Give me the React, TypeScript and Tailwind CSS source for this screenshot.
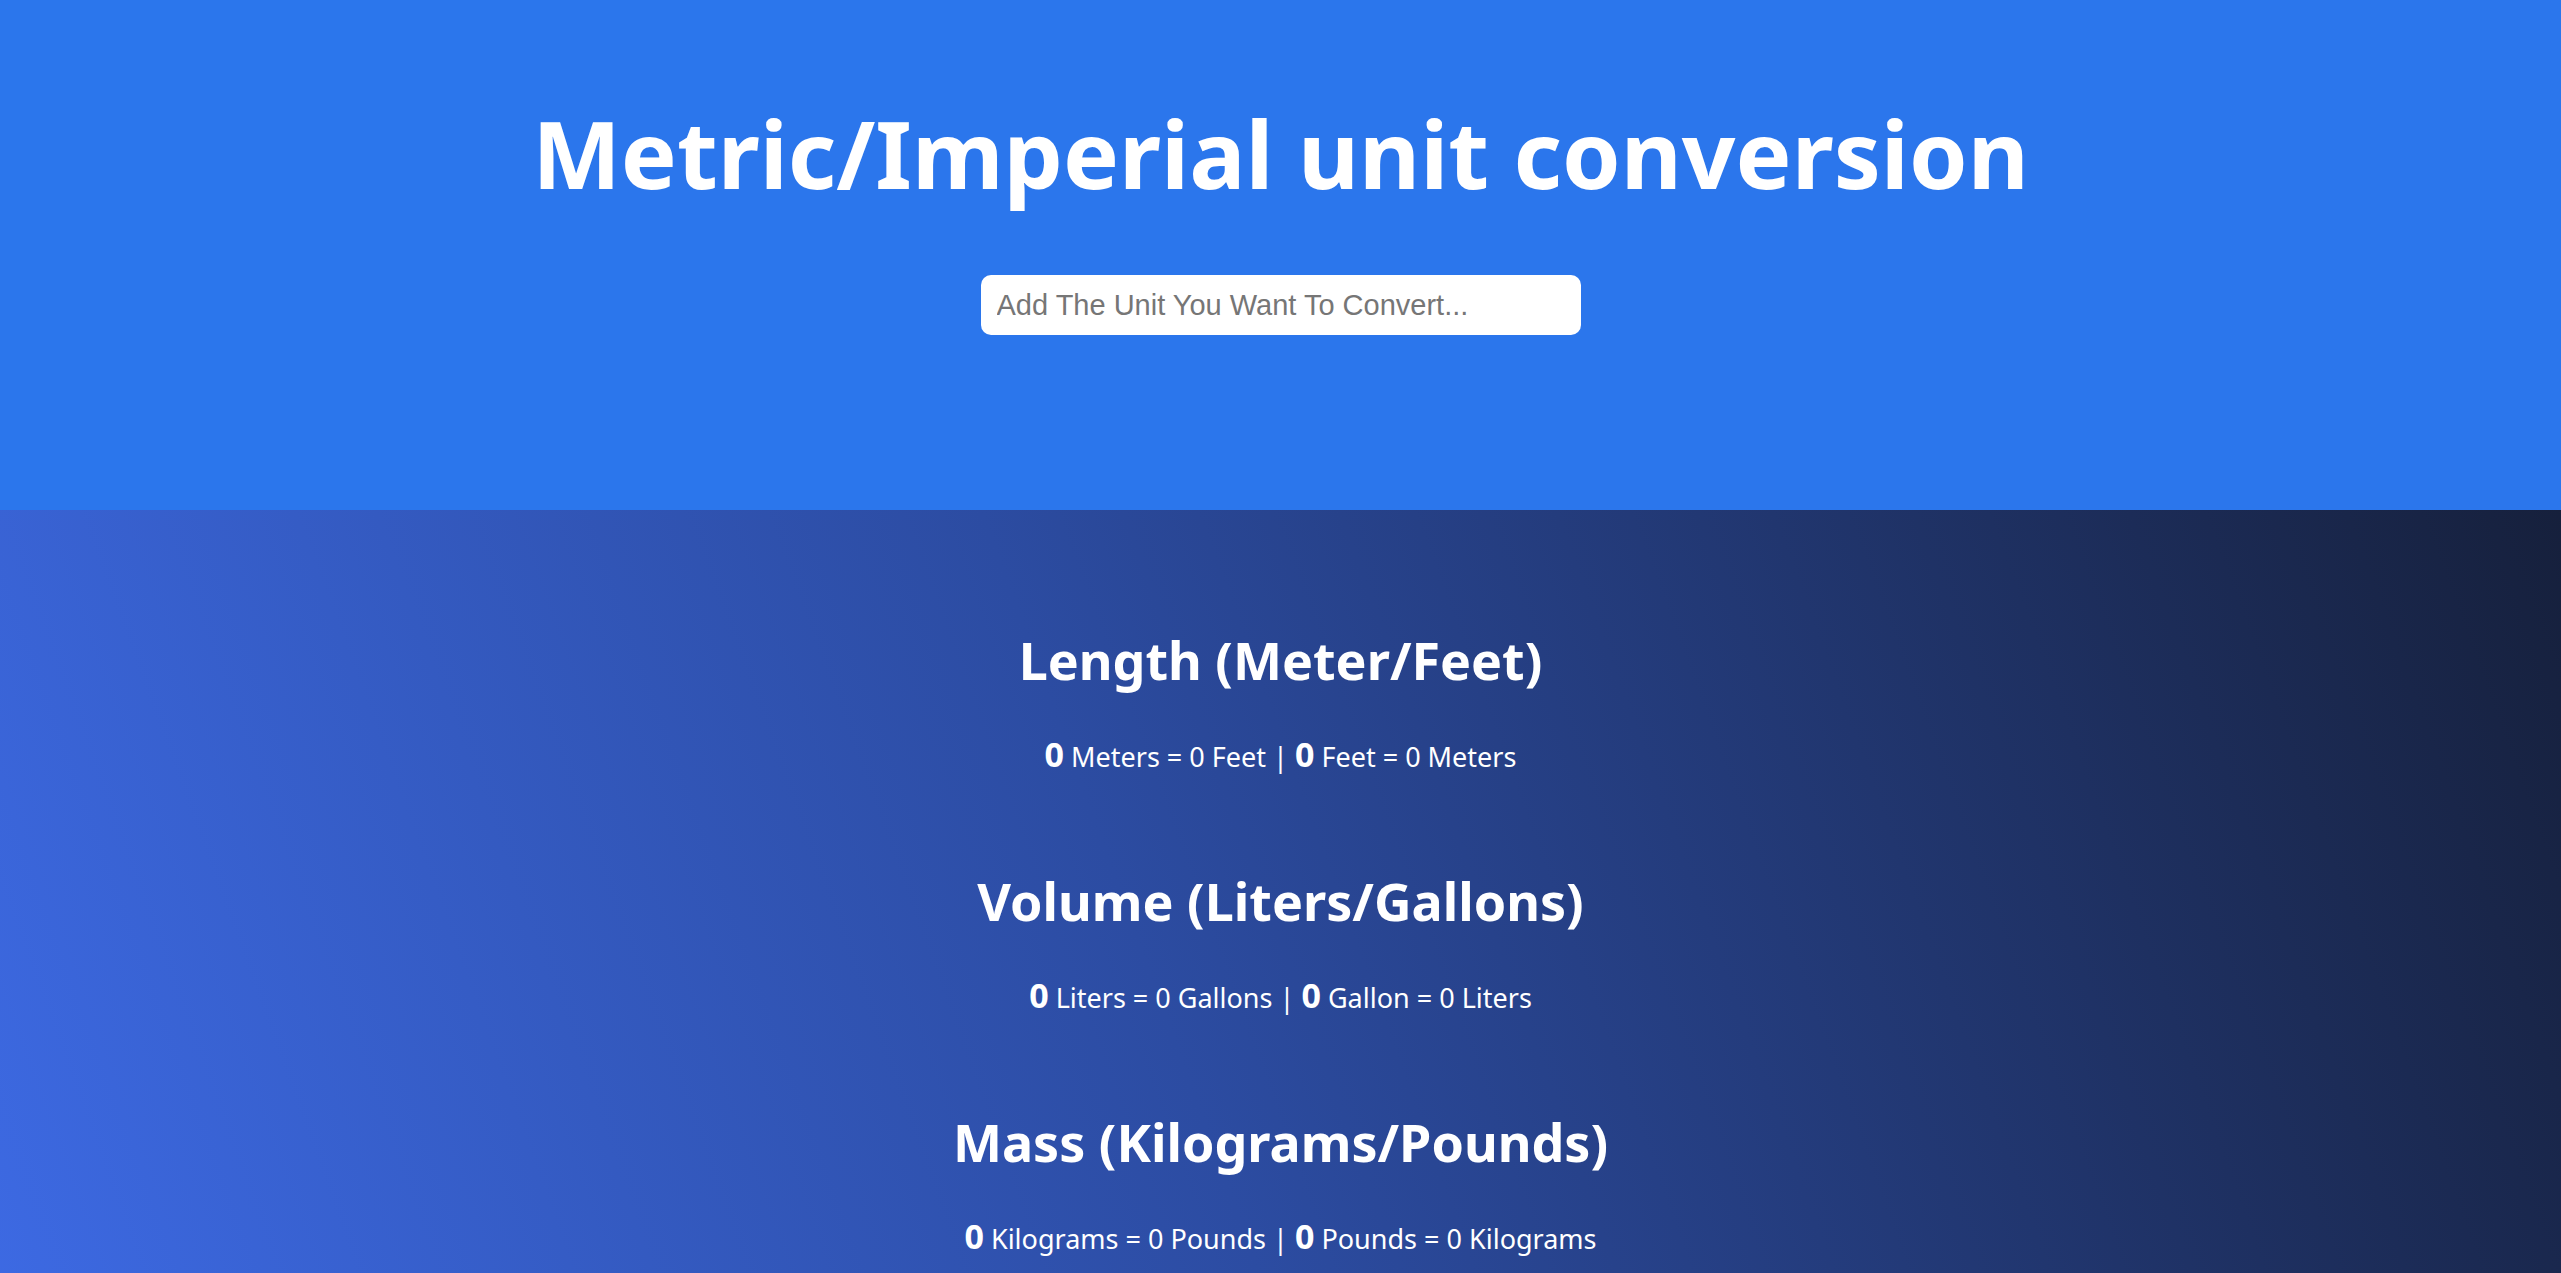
import React from 'react';

const sections = [
  { title: 'Length (Meter/Feet)', a: 'Meters', b: 'Feet', c: 'Feet', d: 'Meters' },
  { title: 'Volume (Liters/Gallons)', a: 'Liters', b: 'Gallons', c: 'Gallon', d: 'Liters' },
  { title: 'Mass (Kilograms/Pounds)', a: 'Kilograms', b: 'Pounds', c: 'Pounds', d: 'Kilograms' },
];

const App: React.FC = () => {
  return (
    <div className="min-h-screen w-full font-['Noto_Sans',sans-serif] text-white">
      {/* Header */}
      <header className="h-[510px] bg-[#2b76ec] flex flex-col items-center pt-[88px]">
        <h1 className="text-[94px] font-bold leading-[130px]">Metric/Imperial unit conversion</h1>
        <input
          type="text"
          placeholder="Add The Unit You Want To Convert..."
          className="mt-[57px] w-[600px] h-[60px] rounded-[10px] bg-white px-[16px] text-[29px] text-[#333] font-['Liberation_Sans',Arial,sans-serif] placeholder:text-[#767676] outline-none"
        />
      </header>

      {/* Results */}
      <main className="bg-[linear-gradient(70deg,#3d6ae4_0%,#2c4ca2_45%,#16203c_100%)] flex flex-col items-center pt-[115px] pb-[20px]">
        {sections.map((s) => (
          <section key={s.title} className="h-[241px] flex flex-col items-center">
            <h2 className="text-[52px] font-bold leading-[70px]">{s.title}</h2>
            <p className="mt-[41px] text-[27px] leading-[36px]">
              <span className="text-[34px] font-bold">0</span> {s.a} = 0 {s.b} |{' '}
              <span className="text-[34px] font-bold">0</span> {s.c} = 0 {s.d}
            </p>
          </section>
        ))}
      </main>
    </div>
  );
};

export default App;
